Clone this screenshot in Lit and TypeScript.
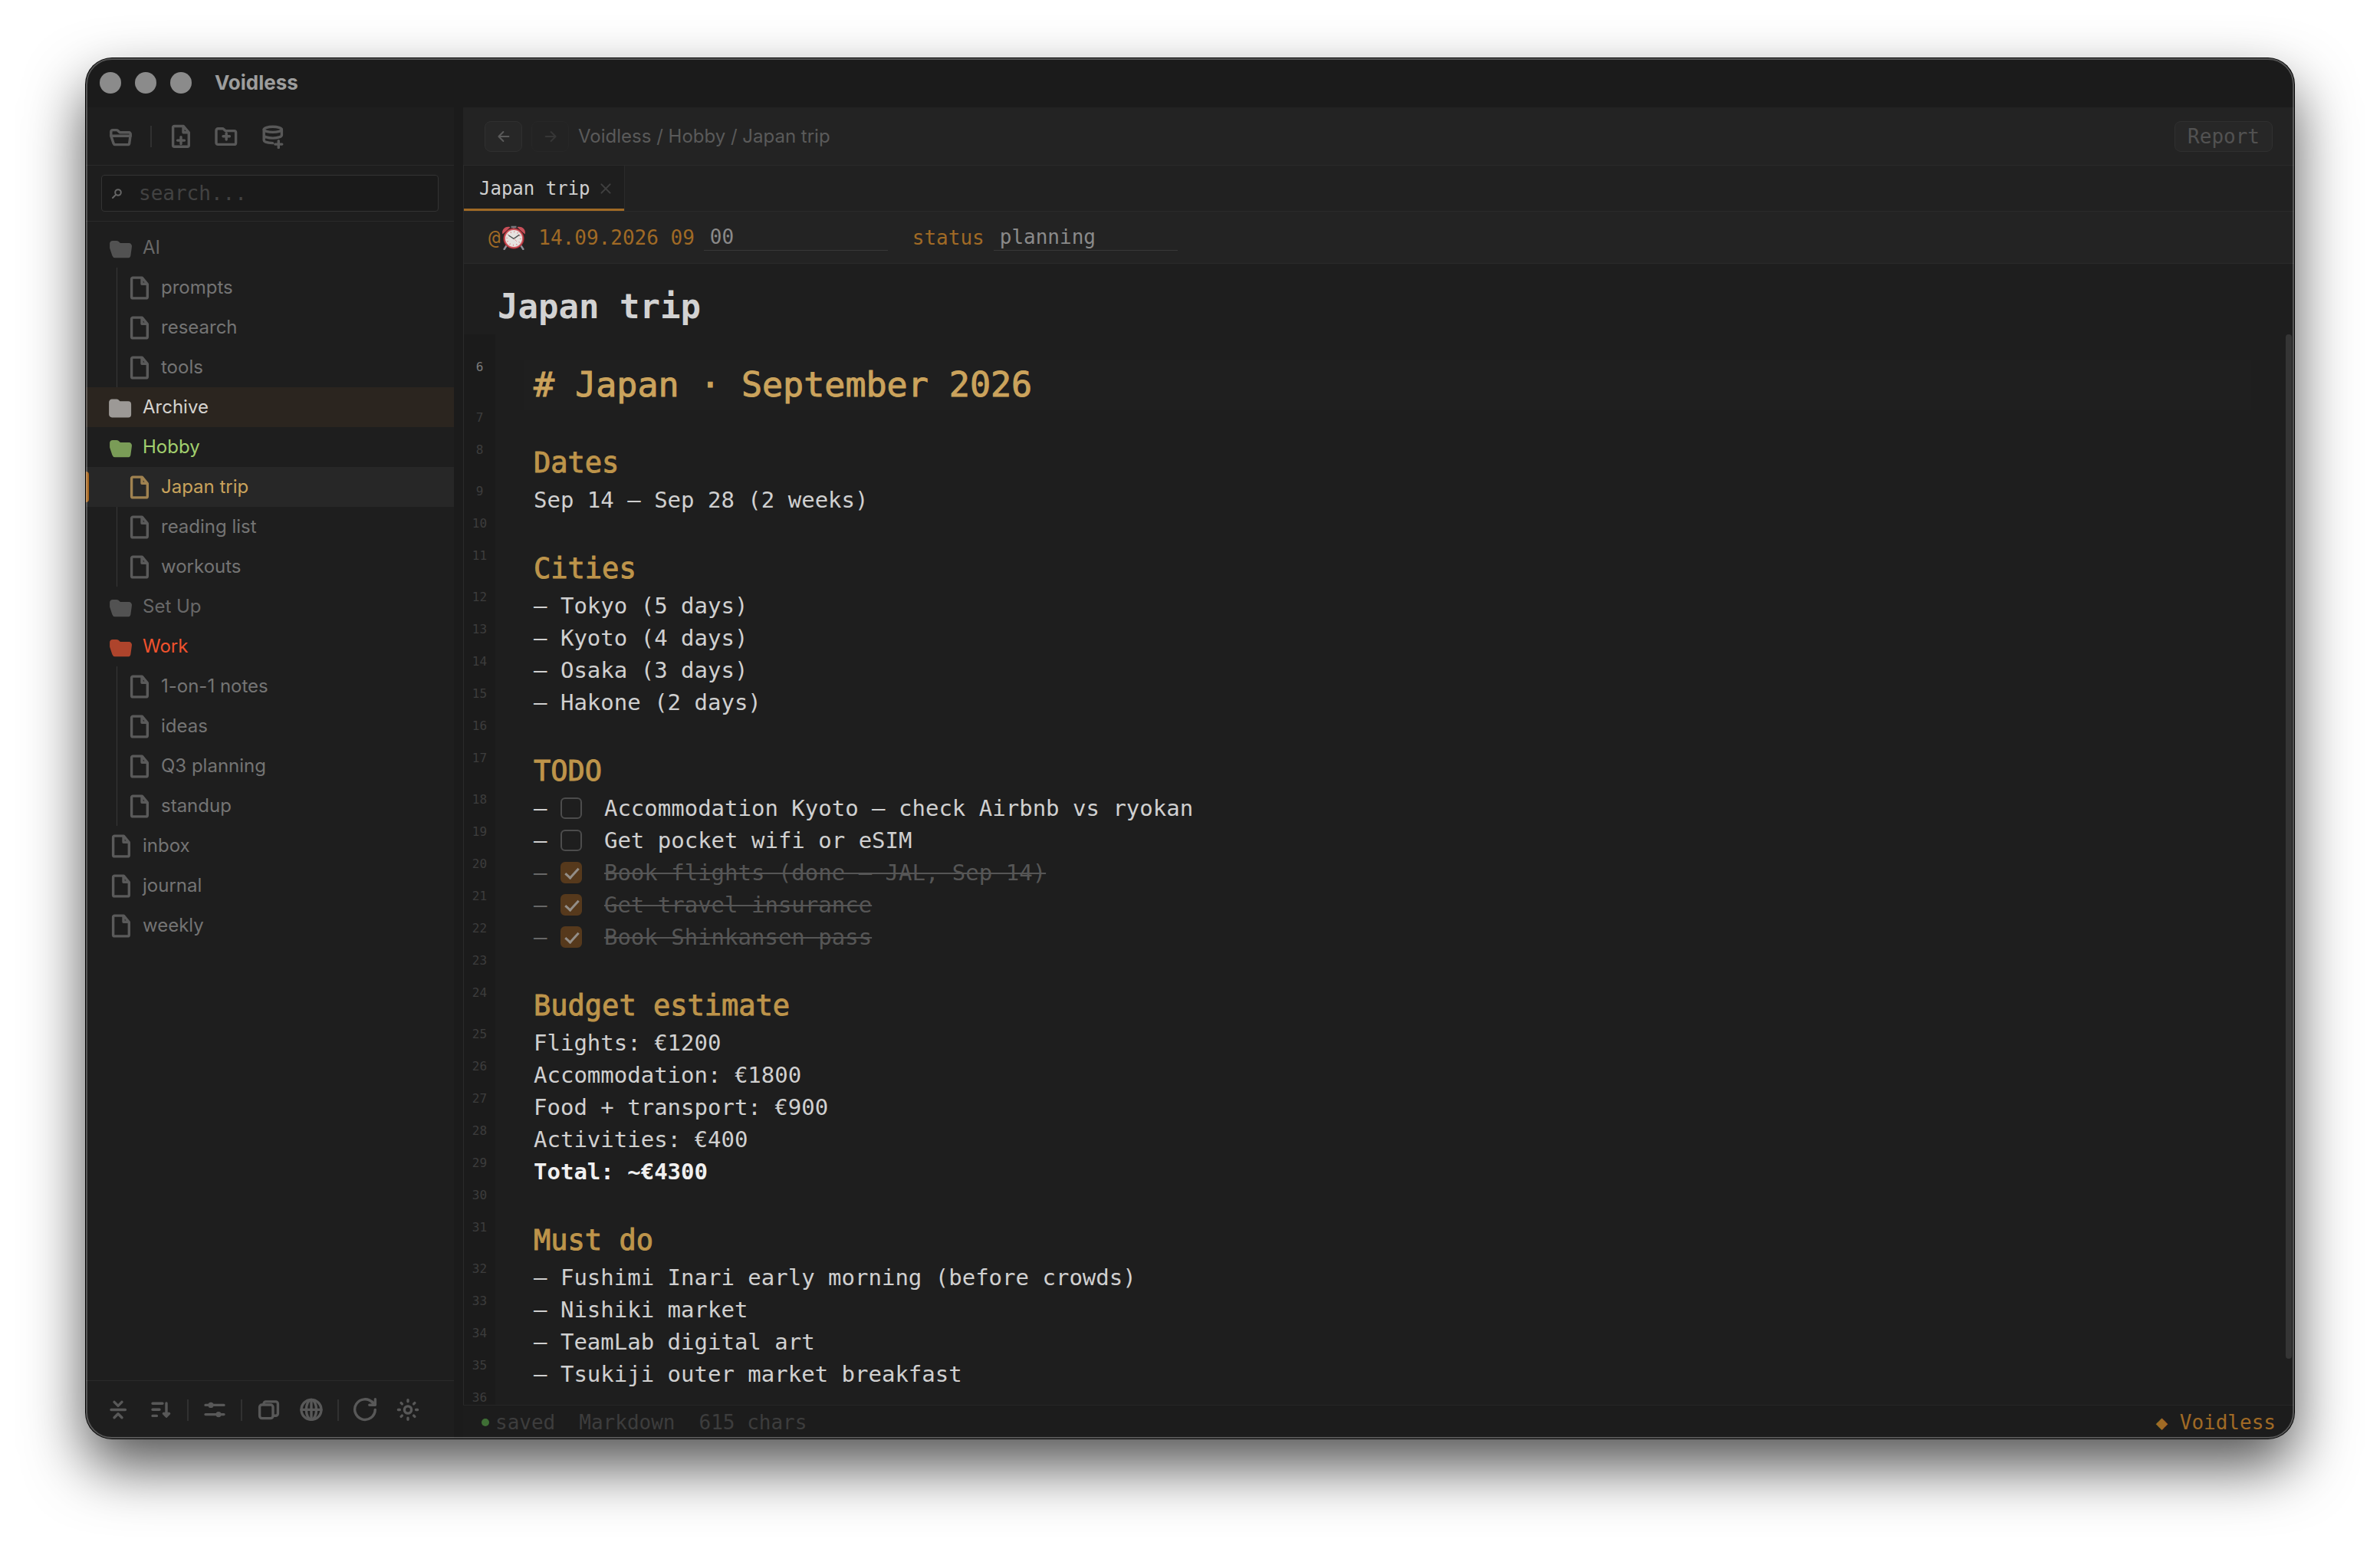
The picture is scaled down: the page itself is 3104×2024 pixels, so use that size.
import { LitElement, html, svg, css, nothing } from "lit";
import { customElement, property, state } from "lit/decorators.js";
import { classMap } from "lit/directives/class-map.js";

const FOLDER_SHUT =
  "M2.4 8a2.2 2.2 0 0 1 2.2-2.2h6a2.2 2.2 0 0 1 1.5.6l2.3 2.2h11.4a2.2 2.2 0 0 1 2.2 2.2v13.4a2.2 2.2 0 0 1-2.2 2.2H4.6a2.2 2.2 0 0 1-2.2-2.2z";
const FOLDER_OPEN =
  "M2.8 15.2V9.7a2.1 2.1 0 0 1 2.1-2.1h5a2 2 0 0 1 1.4.5l3 2.7h11.9a2.1 2.1 0 0 1 2.1 2.4L26.7 25a2.1 2.1 0 0 1-2 1.6H8.1a2.1 2.1 0 0 1-2-1.5z";
const FILE =
  "M7.3 3.1h12l7 8.4v16.7a1.7 1.7 0 0 1-1.7 1.7H7.3a1.7 1.7 0 0 1-1.7-1.7V4.8a1.7 1.7 0 0 1 1.7-1.7zM19 3.6v7.7h7";

const ICONS: Record<string, unknown> = {
  "folder-open": svg`<path d=${FOLDER_OPEN} /><path d="M3 15.2h25.2" />`,
  "folder-open-solid": svg`<path class="solid" d=${FOLDER_OPEN} transform="translate(0 1)" />`,
  "folder-solid": svg`<path class="solid" d=${FOLDER_SHUT} transform="translate(-.6 1.4)" />`,
  file: svg`<path d=${FILE} />`,
  "file-plus": svg`<path d=${FILE} transform="translate(0 -.6)" /><path d="M16 16.6v9M11.5 21.1h9" />`,
  "folder-plus": svg`<path d=${FOLDER_SHUT} transform="translate(-.4 0)" /><path d="M15.2 11.6v8.4M11 15.8h8.4" />`,
  "database-plus": svg`<ellipse cx="15.8" cy="6.8" rx="11.6" ry="3.6" />
    <path d="M4.2 6.8V21c0 2 4.6 3.4 11.4 3.6M27.4 6.8v7.4c0 2.2-5 3.9-11.6 3.9S4.2 16.4 4.2 14.2M23.3 21.6v9M18.8 26.1h9" />`,
  collapse: svg`<path d="M7 15.5h18.4M11 5.4l5 5 5-5M11 25.8l5-5 5 5" />`,
  sort: svg`<path d="M5 7.2h13M5 15.3h9M5 23.4h5.4M23 7v17M19.4 20.4L23 24.2l3.6-3.8z" />`,
  sliders: svg`<path d="M4 9.4h24M4 21.6h24" /><circle class="dot" cx="11" cy="9.4" r="3.6" /><circle class="dot" cx="21" cy="21.6" r="3.6" />`,
  copy: svg`<rect x="4.6" y="9" width="17.4" height="17.6" rx="3" /><path d="M10 8.4V7.5a2.6 2.6 0 0 1 2.6-2.6h13a2.8 2.8 0 0 1 2.8 2.8v12.8a2.8 2.8 0 0 1-2.8 2.8H22.6" />`,
  globe: svg`<circle cx="16" cy="15.4" r="13" /><path d="M3 15.4h26M16 2.4v26" /><ellipse cx="16" cy="15.4" rx="6.6" ry="13" />`,
  refresh: svg`<path d="M29.3 15.4a13.3 13.3 0 1 1-3.4-9.2M29.4 1.8v7.4h-7.6M29 8.8l-4-4" />`,
  sun: svg`<circle cx="16" cy="15.5" r="4.6" /><path d="M16 2.8v2M16 26.2v2M3.4 15.5h2M26.6 15.5h2M7.1 6.6l1.3 1.3M23.6 23.1l1.3 1.3M7.1 24.4l1.3-1.3M23.6 7.9l1.3-1.3" />`,
  search: svg`<circle cx="17" cy="15" r="3.8" /><path d="M14 18l-4 4" />`,
  left: svg`<path d="M22.4 16H10M15.4 10l-6 6 6 6" />`,
  right: svg`<path d="M9.6 16H22M16.6 10l6 6-6 6" />`,
  close: svg`<path d="M10.4 10.4l11.2 11.2M21.6 10.4L10.4 21.6" />`,
};

@customElement("void-icon")
class VoidIcon extends LitElement {
  static styles = css`
    :host {
      display: inline-flex;
      flex: none;
    }
    .glyph {
      width: 32px;
      height: 32px;
      fill: none;
      stroke: currentColor;
      stroke-width: 3.4;
      stroke-linecap: round;
      stroke-linejoin: round;
    }
    .thin {
      stroke-width: 2;
    }
    .solid,
    .dot {
      fill: currentColor;
    }
    .dot {
      stroke: none;
    }
  `;
  @property() name = "file";
  @property({ type: Boolean }) thin = false;
  render() {
    return html`<svg class=${classMap({ glyph: true, thin: this.thin })} viewBox="0 0 32 32" aria-hidden="true">
      ${ICONS[this.name]}
    </svg>`;
  }
}

interface Entry {
  name: string;
  icon: string;
  tone?: string;
  children?: string[];
}

const TREE: Entry[] = [
  { name: "AI", icon: "folder-open-solid", tone: "muted", children: ["prompts", "research", "tools"] },
  { name: "Archive", icon: "folder-solid", tone: "hover" },
  { name: "Hobby", icon: "folder-open-solid", tone: "green", children: ["Japan trip", "reading list", "workouts"] },
  { name: "Set Up", icon: "folder-open-solid", tone: "muted" },
  { name: "Work", icon: "folder-open-solid", tone: "red", children: ["1-on-1 notes", "ideas", "Q3 planning", "standup"] },
  { name: "inbox", icon: "file" },
  { name: "journal", icon: "file" },
  { name: "weekly", icon: "file" },
];

type Kind = "h1" | "h2" | "text" | "bold" | "todo" | "done";
const NOTE: [Kind, string][] = [
  ["h1", "# Japan · September 2026"],
  ["text", ""],
  ["h2", "Dates"],
  ["text", "Sep 14 — Sep 28 (2 weeks)"],
  ["text", ""],
  ["h2", "Cities"],
  ["text", "– Tokyo (5 days)"],
  ["text", "– Kyoto (4 days)"],
  ["text", "– Osaka (3 days)"],
  ["text", "– Hakone (2 days)"],
  ["text", ""],
  ["h2", "TODO"],
  ["todo", "Accommodation Kyoto — check Airbnb vs ryokan"],
  ["todo", "Get pocket wifi or eSIM"],
  ["done", "Book flights (done — JAL, Sep 14)"],
  ["done", "Get travel insurance"],
  ["done", "Book Shinkansen pass"],
  ["text", ""],
  ["h2", "Budget estimate"],
  ["text", "Flights: €1200"],
  ["text", "Accommodation: €1800"],
  ["text", "Food + transport: €900"],
  ["text", "Activities: €400"],
  ["bold", "Total: ~€4300"],
  ["text", ""],
  ["h2", "Must do"],
  ["text", "– Fushimi Inari early morning (before crowds)"],
  ["text", "– Nishiki market"],
  ["text", "– TeamLab digital art"],
  ["text", "– Tsukiji outer market breakfast"],
  ["text", ""],
];
const FIRST_LINE = 6;

@customElement("app-root")
class AppRoot extends LitElement {
  static styles = css`
    :host {
      display: flex;
      box-sizing: border-box;
      height: 100vh;
      padding: 76px 112px 148px;
      background: #fff;
      overflow: hidden;
      --ui: Inter, "Noto Sans", sans-serif;
      --mono: "DejaVu Sans Mono", "Liberation Mono", monospace;
      --rule: #2a2a2a;
      --accent: #a06a25;
      font: 24px/32px var(--ui);
      color: #747474;
    }
    *,
    *::before,
    *::after {
      box-sizing: border-box;
    }
    button,
    input {
      margin: 0;
      padding: 0;
      border: 0;
      background: none;
      font: inherit;
      color: inherit;
    }
    .window {
      position: relative;
      flex: 1;
      display: flex;
      flex-direction: column;
      min-width: 0;
      border-radius: 34px;
      background: #1b1b1b;
      box-shadow: 0 0 0 1px #000, 0 36px 78px rgba(0, 0, 0, 0.68);
    }
    .window::after {
      content: "";
      position: absolute;
      inset: 0;
      border: 2px solid rgba(255, 255, 255, 0.25);
      border-radius: 34px;
      pointer-events: none;
    }
    .titlebar {
      display: flex;
      align-items: center;
      gap: 18px;
      height: 64px;
      flex: none;
      padding-left: 18px;
    }
    .light {
      width: 28px;
      height: 28px;
      border-radius: 50%;
      background: #8b8b8b;
    }
    .app-name {
      margin: 0 0 0 12px;
      font-size: 26px;
      font-weight: 700;
      color: #9d9d9d;
    }
    .columns {
      flex: 1;
      min-height: 0;
      display: grid;
      grid-template-columns: 480px minmax(0, 1fr);
      gap: 12px;
      border-radius: 0 0 34px 34px;
      overflow: hidden;
    }

    .sidebar {
      display: flex;
      flex-direction: column;
      min-height: 0;
      background: #1e1e1e;
    }
    .tools {
      display: flex;
      align-items: center;
      height: 76px;
      flex: none;
      padding: 0 16px;
      border-bottom: 1px solid var(--rule);
      color: #585858;
    }
    .tool {
      display: flex;
      justify-content: center;
      width: 60px;
    }
    .divider {
      width: 2px;
      height: 28px;
      margin: 0 8px;
      background: #313131;
    }
    .footer {
      height: 76px;
      padding: 0 14px;
      border-top: 1px solid var(--rule);
      border-bottom: 0;
    }
    .footer .tool {
      width: 56px;
    }
    .footer .divider {
      margin: 0 6px;
    }
    .search {
      flex: none;
      padding: 12px 20px;
      border-bottom: 1px solid var(--rule);
    }
    .search-box {
      display: flex;
      align-items: center;
      height: 48px;
      gap: 12px;
      padding-left: 4px;
      border: 1px solid #333;
      border-radius: 4px;
      background: #1a1a1a;
      color: #666;
    }
    .search-input {
      flex: 1;
      min-width: 0;
      height: 44px;
      font: 26px/32px var(--mono);
      outline: none;
    }
    .search-input::placeholder {
      color: #424242;
      opacity: 1;
    }
    .tree {
      flex: 1;
      min-height: 0;
      margin: 0;
      padding: 8px 0;
      list-style: none;
      overflow: hidden;
    }
    .branch {
      margin: 0;
      padding: 0;
      list-style: none;
    }
    .row {
      position: relative;
      display: flex;
      align-items: center;
      gap: 12px;
      width: 100%;
      height: 52px;
      padding-left: 30px;
      text-align: left;
    }
    .row void-icon {
      color: #5a5a5a;
    }
    .child {
      padding-left: 54px;
    }
    .child::before {
      content: "";
      position: absolute;
      left: 40px;
      top: 0;
      bottom: 0;
      width: 1px;
      background: #383838;
    }
    .muted {
      color: #686868;
    }
    .muted void-icon {
      color: #525252;
    }
    .hover {
      background: #2b251f;
      color: #d6d3cf;
    }
    .hover void-icon {
      color: #9c9996;
    }
    .green {
      color: #a2d06e;
    }
    .green void-icon {
      color: #7a9c57;
    }
    .red {
      color: #f0522d;
    }
    .red void-icon {
      color: #ae442c;
    }
    .active {
      background: #272727;
      color: #c9a35c;
    }
    .active void-icon {
      color: #a08250;
    }
    .active::before {
      left: 0;
      top: 6px;
      bottom: 6px;
      width: 4px;
      border-radius: 0 4px 4px 0;
      background: #a9671f;
    }

    .main {
      display: flex;
      flex-direction: column;
      min-width: 0;
      min-height: 0;
      background: #1e1e1e;
    }
    .topbar {
      display: flex;
      align-items: center;
      gap: 12px;
      height: 76px;
      flex: none;
      padding: 0 28px;
      background: #232323;
      border-bottom: 1px solid var(--rule);
    }
    .nav,
    .report {
      display: flex;
      align-items: center;
      justify-content: center;
      width: 49px;
      height: 40px;
      border: 1px solid #303030;
      border-radius: 8px;
      background: #272727;
      color: #5a5a5a;
    }
    .nav:disabled {
      border-color: #272727;
      background: #232323;
      color: #363636;
    }
    .crumbs {
      flex: 1;
      color: #5a5a5a;
    }
    .crumb {
      color: inherit;
      text-decoration: none;
    }
    .report {
      width: auto;
      padding: 0 16px;
      font: 26px/32px var(--mono);
      color: #525252;
    }
    .workspace {
      flex: 1;
      min-height: 0;
      display: flex;
      flex-direction: column;
      border-left: 1px solid var(--rule);
    }
    .tabs {
      display: flex;
      height: 60px;
      flex: none;
      background: #212121;
      border-bottom: 1px solid var(--rule);
    }
    .tab {
      display: flex;
      align-items: center;
      gap: 4px;
      padding: 0 8px 0 20px;
      border-right: 1px solid var(--rule);
      background: #1e1e1e;
      box-shadow: inset 0 -3px var(--accent);
      font: 24px/32px var(--mono);
      color: #cfcfcf;
    }
    .close {
      display: flex;
      color: #404040;
    }
    .props {
      display: flex;
      align-items: center;
      gap: 32px;
      height: 68px;
      flex: none;
      padding-left: 32px;
      background: #232323;
      border-bottom: 1px solid var(--rule);
      font: 26px/34px var(--mono);
    }
    .prop {
      display: flex;
      align-items: center;
      gap: 12px;
    }
    .key {
      display: flex;
      align-items: center;
      color: var(--accent);
      white-space: pre;
    }
    .clock {
      width: 34px;
      height: 32px;
    }
    .value {
      width: 240px;
      height: 34px;
      padding: 0 8px;
      border-bottom: 1px solid #383838;
      color: #8a8a8a;
      outline: none;
    }
    .note-title {
      flex: none;
      margin: 0;
      padding: 28px 44px 8px;
      font: 700 44px/56px var(--mono);
      color: #d2d2d2;
    }
    .editor {
      position: relative;
      flex: 1;
      min-height: 0;
      display: grid;
      grid-template-columns: 41px minmax(0, 1fr);
      overflow: hidden;
    }
    .gutter {
      padding-top: 33px;
      background: #1b1b1b;
      text-align: center;
      font: 16px/20px var(--mono);
      color: #3d3d3d;
    }
    .num {
      height: 42px;
    }
    .num-h1 {
      height: 66px;
      color: #7a7a7a;
    }
    .num-h2 {
      height: 54px;
    }
    .content {
      padding: 33px 56px 0 38px;
      font: 29px/42px var(--mono);
      color: #d0d0d0;
    }
    .line {
      display: flex;
      align-items: center;
      height: 42px;
      margin: 0;
      padding: 0 12px;
      white-space: pre;
      font-weight: 400;
    }
    .line-h1 {
      height: 66px;
      background: #1f1f1f;
      font-size: 45px;
      color: #cba35c;
      -webkit-text-stroke: 1px currentColor;
    }
    .line-h2 {
      height: 54px;
      font-size: 37px;
      color: #bd944a;
      -webkit-text-stroke: 1px currentColor;
    }
    .line-bold {
      font-weight: 700;
      color: #f0f0f0;
    }
    .line-done {
      color: #686868;
    }
    .task {
      display: flex;
      align-items: center;
      gap: 29px;
    }
    .line-done .label {
      color: #565656;
      text-decoration: line-through;
      text-decoration-thickness: 2px;
    }
    .check {
      appearance: none;
      position: relative;
      width: 28px;
      height: 28px;
      border: 2px solid #4c4c4c;
      border-radius: 6px;
    }
    .check:checked {
      border-color: #56391c;
      background: #56391c;
    }
    .check:checked::after {
      content: "";
      position: absolute;
      left: 8px;
      top: 2px;
      width: 10px;
      height: 18px;
      border: solid #938e88;
      border-width: 0 3px 3px 0;
      transform: rotate(42deg);
    }
    .thumb {
      position: absolute;
      right: 3px;
      top: 0;
      bottom: 60px;
      width: 8px;
      border-radius: 4px;
      background: #353535;
    }
    .status {
      display: flex;
      align-items: center;
      gap: 31px;
      height: 44px;
      flex: none;
      padding: 0 24px;
      border-top: 1px solid #262626;
      background: #1c1c1c;
      font: 26px/32px var(--mono);
      color: #3d3d3d;
    }
    .saved {
      display: flex;
      align-items: center;
      gap: 8px;
    }
    .saved::before {
      content: "";
      width: 10px;
      height: 10px;
      border-radius: 50%;
      background: #3f6f35;
    }
    .brand {
      margin-left: auto;
      color: var(--accent);
    }
  `;

  @state() private query = "";

  private tool(name: string, label: string) {
    return html`<button class="tool" aria-label=${label}><void-icon name=${name}></void-icon></button>`;
  }

  private entry(e: Entry) {
    return html`<li>
      <button class=${classMap({ row: true, [e.tone ?? "plain"]: true })}>
        <void-icon name=${e.icon}></void-icon>${e.name}
      </button>
      ${e.children
        ? html`<ul class="branch">
            ${e.children.map(
              (name) => html`<li>
                <button class=${classMap({ row: true, child: true, active: name === "Japan trip" })}>
                  <void-icon name="file"></void-icon>${name}
                </button>
              </li>`
            )}
          </ul>`
        : nothing}
    </li>`;
  }

  private line([kind, text]: [Kind, string]) {
    if (kind === "h1") return html`<h2 class="line line-h1">${text}</h2>`;
    if (kind === "h2") return html`<h3 class="line line-h2">${text}</h3>`;
    if (kind === "todo" || kind === "done") {
      return html`<div class="line line-${kind}">
        <span>– </span><label class="task"
          ><input class="check" type="checkbox" ?checked=${kind === "done"} /><span class="label">${text}</span></label
        >
      </div>`;
    }
    return html`<p class="line line-${kind}">${text}</p>`;
  }

  private clock() {
    return html`<svg class="clock" viewBox="0 0 32 32" role="img" aria-label="⏰">
      <path d="M6.5 26.5L3.6 31M25.5 26.5L28.4 31" stroke="#8f8f98" stroke-width="2.4" stroke-linecap="round" />
      <path d="M12.5 2h7M16 2v3" stroke="#77777d" stroke-width="2.4" />
      <path d="M1.4 11.4C-.2 6 4.6.4 11.6 2.2z" fill="#c9505a" />
      <path d="M30.6 11.4C32.2 6 27.4.4 20.4 2.2z" fill="#c9505a" />
      <circle cx="16" cy="17" r="13.6" fill="#a92c35" />
      <circle cx="16" cy="17" r="12.4" fill="#cf5a61" />
      <circle cx="16" cy="17" r="11" fill="#e6e3e0" />
      <circle cx="16" cy="17" r="8.8" fill="none" stroke="#d98a8c" stroke-width="2" stroke-dasharray="1 3.608" />
      <path d="M9.8 13.2L16 17.4l7-5" fill="none" stroke="#4c5350" stroke-width="1.3" stroke-linecap="round" />
      <path d="M16 17l4 4" stroke="#d98a8c" stroke-width=".8" />
    </svg>`;
  }

  render() {
    return html`
      <div class="window">
        <header class="titlebar">
          <span class="light"></span><span class="light"></span><span class="light"></span>
          <h1 class="app-name">Voidless</h1>
        </header>
        <div class="columns">
          <aside class="sidebar">
            <div class="tools">
              ${this.tool("folder-open", "Open vault")}
              <span class="divider"></span>
              ${this.tool("file-plus", "New note")} ${this.tool("folder-plus", "New folder")}
              ${this.tool("database-plus", "New database")}
            </div>
            <div class="search">
              <label class="search-box">
                <void-icon name="search" thin></void-icon>
                <input
                  class="search-input"
                  type="text"
                  aria-label="Search"
                  placeholder="search..."
                  .value=${this.query}
                  @input=${(e: Event) => (this.query = (e.target as HTMLInputElement).value)}
                />
              </label>
            </div>
            <ul class="tree">
              ${TREE.map((e) => this.entry(e))}
            </ul>
            <div class="tools footer">
              ${this.tool("collapse", "Collapse all")} ${this.tool("sort", "Sort")}
              <span class="divider"></span>
              ${this.tool("sliders", "Filters")}
              <span class="divider"></span>
              ${this.tool("copy", "Templates")} ${this.tool("globe", "Language")}
              <span class="divider"></span>
              ${this.tool("refresh", "Reload")} ${this.tool("sun", "Theme")}
            </div>
          </aside>
          <main class="main">
            <div class="topbar">
              <button class="nav" aria-label="Back"><void-icon name="left" thin></void-icon></button>
              <button class="nav" aria-label="Forward" disabled><void-icon name="right" thin></void-icon></button>
              <nav class="crumbs">
                <a class="crumb" href="#voidless">Voidless</a> / <a class="crumb" href="#hobby">Hobby</a> /
                <a class="crumb" href="#japan-trip">Japan trip</a>
              </nav>
              <button class="report">Report</button>
            </div>
            <div class="workspace">
              <div class="tabs">
                <div class="tab">
                  <span>Japan trip</span>
                  <button class="close" aria-label="Close tab"><void-icon name="close" thin></void-icon></button>
                </div>
              </div>
              <div class="props">
                <div class="prop">
                  <label class="key" for="time"><span>@</span>${this.clock()}<span> 14.09.2026 09</span></label>
                  <input class="value" id="time" type="text" value="00" />
                </div>
                <div class="prop">
                  <label class="key" for="state">status</label>
                  <input class="value" id="state" type="text" value="planning" />
                </div>
              </div>
              <h2 class="note-title">Japan trip</h2>
              <div class="editor">
                <div class="gutter" aria-hidden="true">
                  ${NOTE.map(([kind], i) => html`<div class="num num-${kind}">${FIRST_LINE + i}</div>`)}
                </div>
                <article class="content">${NOTE.map((l) => this.line(l))}</article>
                <div class="thumb"></div>
              </div>
            </div>
            <footer class="status">
              <span class="saved">saved</span><span>Markdown</span><span>615 chars</span>
              <span class="brand">◆ Voidless</span>
            </footer>
          </main>
        </div>
      </div>
    `;
  }
}
